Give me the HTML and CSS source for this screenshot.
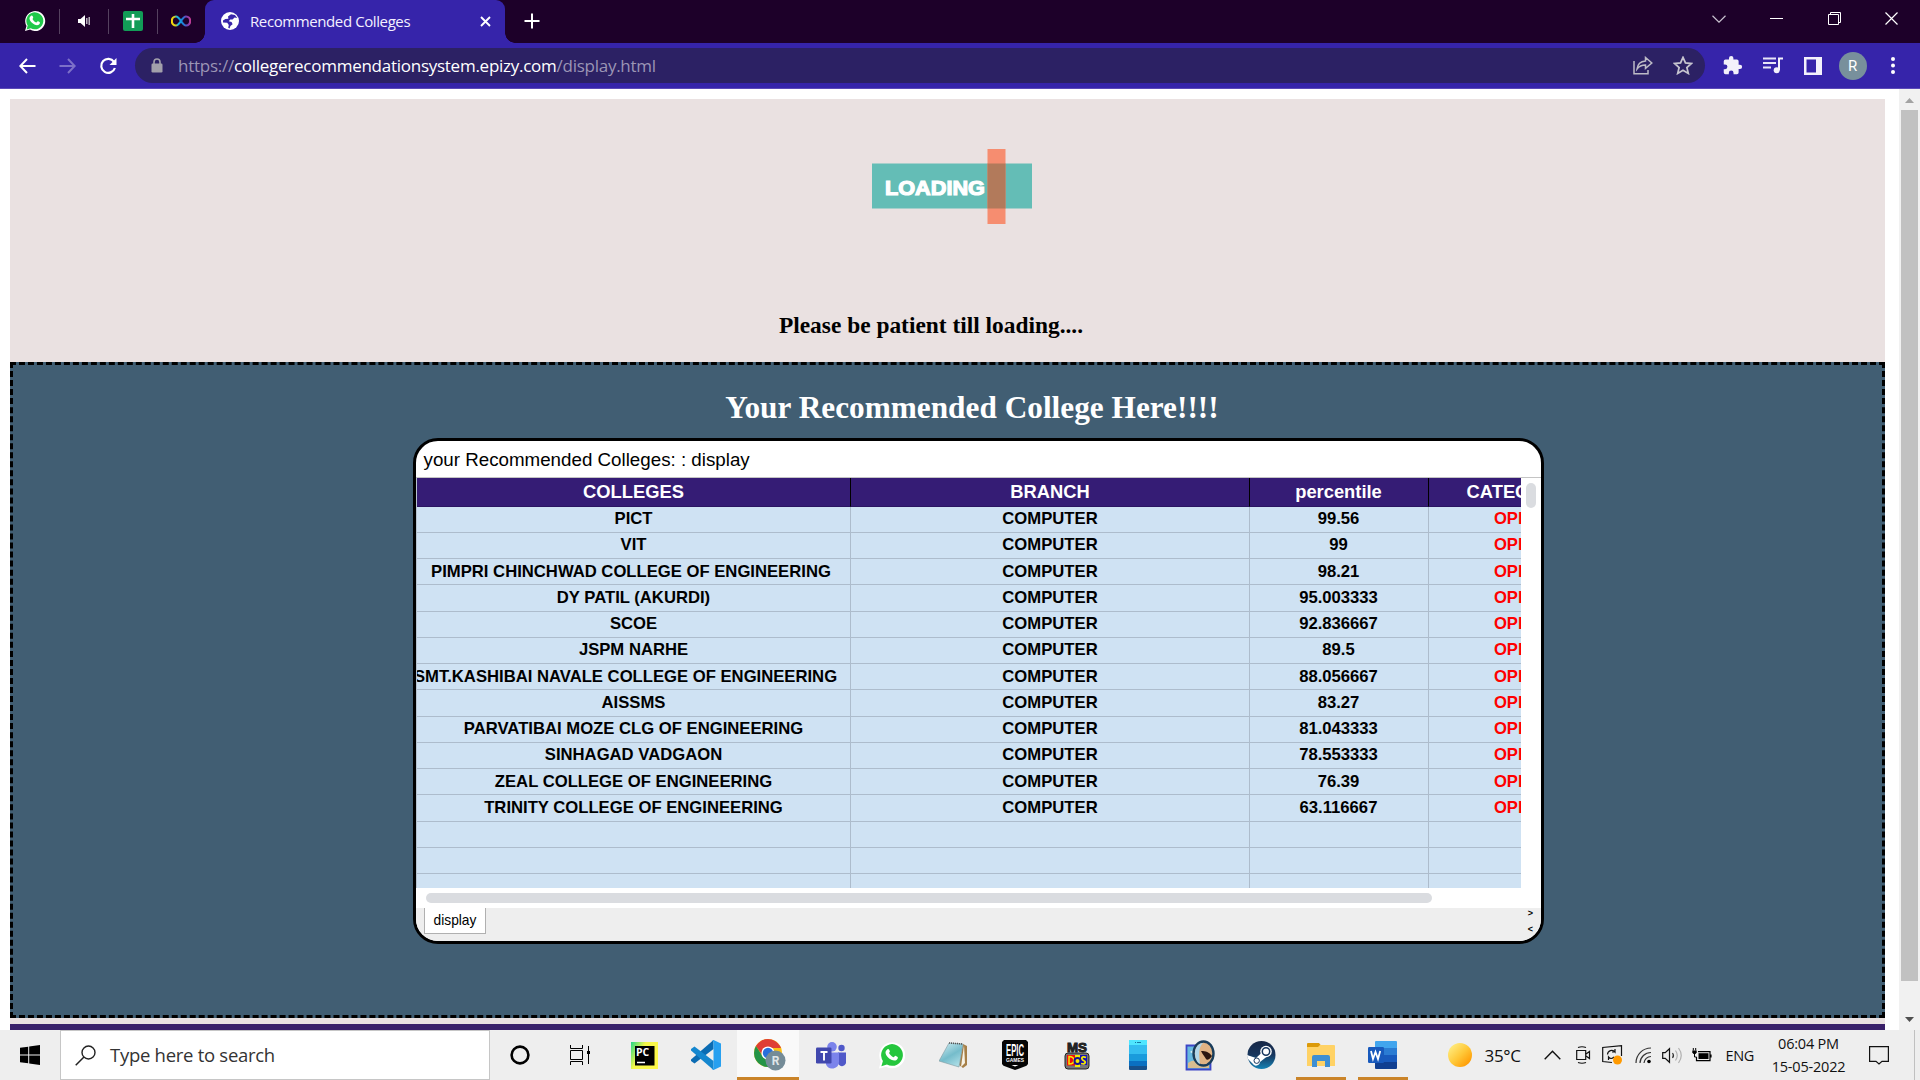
FILE: index.html
```html
<!DOCTYPE html>
<html lang="en">
<head>
<meta charset="utf-8">
<title>Recommended Colleges</title>
<link rel="stylesheet" href="styles.css">
</head>
<body>
<header class="tabstrip">
  <div class="pinned">
    <span class="pin pin-first"><svg width="22" height="22" viewBox="0 0 22 22"><path d="M1 21l1.500-5A10 10 0 1 1 6 19.600z" fill="#fff"/><path d="M2.600 19.400l1.100-3.900A8.500 8.500 0 1 1 6.700 18.300z" fill="#1fc94a"/><path d="M7.200 5.700c1-.8 1.600.5 2 1.700.2.700-.9 1.200-.6 1.800.9 1.600 2 2.600 3.600 3.200.7.200 1.100-1.300 1.700-1.100 1 .4 2.500 1 2 2-.8 2.300-3.300 2.300-5.500 1.200-2.600-1.200-4.500-3.500-4.900-5.700-.1-1.400.8-2.400 1.700-3.100z" fill="#fff"/></svg></span>
    <span class="pin"><svg width="14" height="14" viewBox="0 0 14 14"><path d="M1 5h2.500L8 1v12L3.500 9H1z" fill="#fff"/><path d="M9.800 4v6M12.200 3v8" stroke="#fff" stroke-width="1.300" opacity=".8"/></svg></span>
    <span class="pin"><svg width="20" height="20" viewBox="0 0 20 20"><rect width="20" height="20" rx="2" fill="#129c57"/><path d="M10 3v14M3 8h14" stroke="#fff" stroke-width="2.600"/></svg></span>
    <span class="pin pin-last"><svg width="20" height="12" viewBox="0 0 20 12"><defs><linearGradient id="rainbow" gradientUnits="userSpaceOnUse" x1="0" y1="8" x2="20" y2="5"><stop offset="0" stop-color="#ffd800"/><stop offset=".2" stop-color="#d8d020"/><stop offset=".35" stop-color="#13b7e8"/><stop offset=".6" stop-color="#1c7fd6"/><stop offset=".8" stop-color="#7a3fb5"/><stop offset="1" stop-color="#c93a8f"/></linearGradient></defs><path d="M10 6C8 3 6.500 1.500 5 1.500a4.200 4.500 0 0 0 0 9C6.500 10.500 8 9 10 6S13.500 1.500 15 1.500a4.200 4.500 0 0 1 0 9C13.500 10.500 12 9 10 6z" fill="none" stroke="url(#rainbow)" stroke-width="2.200"/></svg></span>
  </div>
  <div class="tab">
    <svg width="18" height="18" viewBox="0 0 18 18"><circle cx="9" cy="9" r="9" fill="#fff"/><path d="M10 2.200l-3 2.200.4 2.300-3 .2L2 8.500v2l4.200.2 1.600 2.300-.6 2.700 1.400.8.800-2.500 2.200-1.700-1-2.300-2.800-.7 1.400-1.800 2.300-.1 2.100-2 2.700.5-2.400-2.800z" fill="#3a26aa"/></svg>
    <span class="tab-title">Recommended Colleges</span>
    <svg class="tab-close" width="11" height="11" viewBox="0 0 11 11"><path d="M1 1l9 9M10 1l-9 9" stroke="#fff" stroke-width="1.900"/></svg>
  </div>
  <svg class="newtab" width="16" height="16" viewBox="0 0 16 16"><path d="M8 .5v15M.5 8h15" stroke="#fff" stroke-width="2"/></svg>
  <div class="window-buttons">
    <span><svg width="14" height="8" viewBox="0 0 14 8"><path d="M.5.8L7 7.200 13.500.8" fill="none" stroke="#c9c1cf" stroke-width="1.200"/></svg></span>
    <span><svg width="13" height="2" viewBox="0 0 13 2"><path d="M0 .5h13" stroke="#fff"/></svg></span>
    <span><svg width="13" height="13" viewBox="0 0 13 13"><path d="M.5 2.500h10v10H.5zM2.500 2.500v-2h10v10h-2" fill="none" stroke="#fff"/></svg></span>
    <span><svg width="13" height="13" viewBox="0 0 13 13"><path d="M.5.5l12 12M12.500.5l-12 12" stroke="#fff" stroke-width="1.200"/></svg></span>
  </div>
</header>

<nav class="toolbar">
  <div class="nav-buttons">
    <span><svg width="17" height="16" viewBox="0 0 17 16"><path d="M16.500 8H1.500M8 1L1.300 8 8 15" fill="none" stroke="#fff" stroke-width="2"/></svg></span>
    <span><svg width="17" height="16" viewBox="0 0 17 16"><path d="M.5 8h15M9 1l6.700 7L9 15" fill="none" stroke="#7d70c9" stroke-width="2"/></svg></span>
    <span><svg width="18" height="18" viewBox="0 0 18 18"><path d="M15 4.800A7 7 0 1 0 15.900 11" fill="none" stroke="#fff" stroke-width="2.200"/><path d="M17.500 1v7h-7z" fill="#fff"/></svg></span>
  </div>
  <div class="address">
    <svg width="12" height="15" viewBox="0 0 12 15"><rect x=".5" y="5.500" width="11" height="9" rx="1.200" fill="#a2a0ab"/><path d="M3 6V4a3 3 0 0 1 6 0v2" fill="none" stroke="#a2a0ab" stroke-width="1.600"/></svg>
    <span class="url">https://<b>collegerecommendationsystem.epizy.com</b>/display.html</span>
    <svg class="share" width="20" height="19" viewBox="0 0 20 19"><path d="M1 5v12.700h14V14" fill="none" stroke="#bdbbc6" stroke-width="1.500"/><path d="M4 13c.6-5 3.500-7.600 8.500-8V1.500L18.800 7l-6.300 5.400V9C8.500 9 6 10.300 4 13z" fill="none" stroke="#bdbbc6" stroke-width="1.500"/></svg>
    <svg width="20" height="19" viewBox="0 0 24 24"><path d="M12 1.800l3.100 7 7.600.7-5.800 5 1.800 7.500-6.700-4-6.700 4L7.100 14.500l-5.800-5 7.600-.7z" fill="none" stroke="#c6c4cf" stroke-width="2.200"/></svg>
  </div>
  <div class="extensions">
    <span><svg width="21" height="21" viewBox="0 0 24 24"><path d="M20.500 11H19V7a2 2 0 0 0-2-2h-4V3.500a2.500 2.500 0 0 0-5 0V5H4a2 2 0 0 0-2 2v3.800h1.500a2.700 2.700 0 0 1 0 5.400H2V20a2 2 0 0 0 2 2h3.800v-1.500a2.700 2.700 0 0 1 5.400 0V22H17a2 2 0 0 0 2-2v-4h1.500a2.500 2.500 0 0 0 0-5z" fill="#f3f1fb"/></svg></span>
    <span><svg width="20" height="17" viewBox="0 0 20 17"><path d="M0 1.500h13M0 6h13M0 10.500h8" stroke="#e8e5f7" stroke-width="1.800"/><path d="M16 13V1.500h4" fill="none" stroke="#f3f1fb" stroke-width="2"/><circle cx="13.700" cy="13.300" r="3" fill="#f3f1fb"/></svg></span>
    <span><svg width="18" height="18" viewBox="0 0 18 18"><path d="M0 0h18v18H0zM2.500 2.500v13H12v-13z" fill="#f3f1fb" fill-rule="evenodd"/></svg></span>
    <span><i class="avatar">R</i></span>
    <span><svg width="4" height="17" viewBox="0 0 4 17"><g fill="#fff"><circle cx="2" cy="2" r="2"/><circle cx="2" cy="8.500" r="2"/><circle cx="2" cy="15" r="2"/></g></svg></span>
  </div>
</nav>

<div class="viewport">
  <main class="page">
    <section class="loading">
      <svg class="loader" width="160" height="77" viewBox="0 0 160 77"><rect y="15.500" width="160" height="45" fill="#64bdb6"/><text class="loader-text" x="13" y="46.500" textLength="100" lengthAdjust="spacingAndGlyphs">LOADING</text><rect x="115.500" y="1" width="18" height="75" fill="#f68d70"/><rect x="115.500" y="15.500" width="18" height="45" fill="#b27a5b"/></svg>
      <h3>Please be patient till loading....</h3>
    </section>
    <section class="result">
      <h2>Your Recommended College Here!!!!</h2>
      <div class="sheet">
        <div class="sheet-title">your Recommended Colleges: : display</div>
        <div class="sheet-body">
          <div class="grid">
            <div class="row head"><span>COLLEGES</span><span>BRANCH</span><span>percentile</span><span>CATEGORY</span></div>
            <div class="row"><span>PICT</span><span>COMPUTER</span><span>99.56</span><span>OPEN</span></div>
            <div class="row"><span>VIT</span><span>COMPUTER</span><span>99</span><span>OPEN</span></div>
            <div class="row"><span class="trail">PIMPRI CHINCHWAD COLLEGE OF ENGINEERING</span><span>COMPUTER</span><span>98.21</span><span>OPEN</span></div>
            <div class="row"><span>DY PATIL (AKURDI)</span><span>COMPUTER</span><span>95.003333</span><span>OPEN</span></div>
            <div class="row"><span>SCOE</span><span>COMPUTER</span><span>92.836667</span><span>OPEN</span></div>
            <div class="row"><span>JSPM NARHE</span><span>COMPUTER</span><span>89.5</span><span>OPEN</span></div>
            <div class="row"><span class="wide">SMT.KASHIBAI NAVALE COLLEGE OF ENGINEERING</span><span>COMPUTER</span><span>88.056667</span><span>OPEN</span></div>
            <div class="row"><span>AISSMS</span><span>COMPUTER</span><span>83.27</span><span>OPEN</span></div>
            <div class="row"><span>PARVATIBAI MOZE CLG OF ENGINEERING</span><span>COMPUTER</span><span>81.043333</span><span>OPEN</span></div>
            <div class="row"><span>SINHAGAD VADGAON</span><span>COMPUTER</span><span>78.553333</span><span>OPEN</span></div>
            <div class="row"><span>ZEAL COLLEGE OF ENGINEERING</span><span>COMPUTER</span><span>76.39</span><span>OPEN</span></div>
            <div class="row"><span>TRINITY COLLEGE OF ENGINEERING</span><span>COMPUTER</span><span>63.116667</span><span>OPEN</span></div>
            <div class="row"><span></span><span></span><span></span><span></span></div>
            <div class="row"><span></span><span></span><span></span><span></span></div>
            <div class="row"><span></span><span></span><span></span><span></span></div>
          </div>
          <div class="vthumb"></div>
        </div>
        <div class="hscroll"><div class="hthumb"></div></div>
        <div class="sheet-tabs"><span class="sheet-tab">display</span><span class="sheet-arrows"><i>&gt;</i><i>&lt;</i></span></div>
      </div>
    </section>
    <div class="page-footer"></div>
  </main>
  <aside class="scrollbar">
    <svg width="9" height="5" viewBox="0 0 9 5"><path d="M4.500 0L9 5H0z" fill="#a3a3a3"/></svg>
    <div class="thumb"></div>
    <svg class="down" width="9" height="5" viewBox="0 0 9 5"><path d="M0 0h9L4.500 5z" fill="#505050"/></svg>
  </aside>
</div>

<footer class="taskbar">
  <span class="start"><svg width="20" height="20" viewBox="0 0 20 20"><path d="M0 2.800L8.200 1.700v7.800H0zM9.200 1.500L20 0v9.500H9.200zM0 10.500h8.200v7.800L0 17.200zM9.200 10.500H20V20L9.200 18.500z"/></svg></span>
  <div class="search"><svg width="21" height="21" viewBox="0 0 21 21"><circle cx="13.500" cy="7.500" r="6.500" fill="none" stroke="#222" stroke-width="1.400"/><path d="M9 12L.7 20.300" stroke="#222" stroke-width="1.500"/></svg><span>Type here to search</span></div>
  <span class="sys"><svg width="20" height="20" viewBox="0 0 20 20"><circle cx="10" cy="10" r="8.400" fill="none" stroke="#000" stroke-width="2.600"/></svg></span>
  <span class="sys"><svg width="20" height="20" viewBox="0 0 20 20"><path d="M.5 0v3.500h12V0M.5 20v-3.500h12V20M.5 5.500h12v9H.5zM18.500 1v18" fill="none" stroke="#000"/><path d="M17 6h3v3h-3z"/></svg></span>
  <div class="apps">
    <span class="app"><svg width="27" height="27" viewBox="0 0 27 27"><defs><linearGradient id="pc" x2="1" y2=".5"><stop offset="0" stop-color="#21d789"/><stop offset=".45" stop-color="#f6f84a"/><stop offset="1" stop-color="#fcf84a"/></linearGradient></defs><rect width="27" height="27" fill="url(#pc)"/><rect x="4" y="4" width="19.500" height="19.500" fill="#000"/><text x="5" y="14" class="pc">PC</text><path d="M6 20.500h8" stroke="#fff" stroke-width="1.500"/></svg></span>
    <span class="app"><svg width="30" height="30" viewBox="0 0 30 30"><path d="M22.500 0v9L3.500 23.500 0 21V19.500z" fill="#0b6cb3"/><path d="M0 10.500V9l3.500-2.500L22.500 21v9z" fill="#1587cf"/><path d="M22.500 0L30 3.500v23L22.500 30l-1.800-1c1 .5 1.800-.4 1.800-1.500v-25C22.500 1.300 21.500.4 20.700 1z" fill="#27a0f0"/></svg></span>
    <span class="app active"><svg width="33" height="32" viewBox="0 0 33 32"><circle cx="15" cy="14" r="14" fill="#fbc116"/><path d="M2.900 7A14 14 0 0 1 27.100 7L28 9H15l-5 8z" fill="#df3e34"/><path d="M2.900 7A14 14 0 0 0 15 28l5.500-10L9.500 17z" fill="#249447"/><circle cx="15" cy="14" r="6.600" fill="#fff"/><circle cx="15" cy="14" r="5.200" fill="#286fdb"/><circle cx="22.500" cy="21.500" r="10" fill="#758c98"/><text x="22.500" y="26" class="badge-r">R</text></svg></span>
    <span class="app shift"><svg width="30" height="27" viewBox="0 0 30 27"><circle cx="25.500" cy="6" r="3.200" fill="#5059c9"/><path d="M22 10.500h8v8.500a4 4 0 0 1-8 2z" fill="#5059c9"/><circle cx="16" cy="4.800" r="4.800" fill="#7b83eb"/><path d="M10 10.500h13v9.500a6.800 6.800 0 0 1-13 2.500z" fill="#7b83eb"/><rect y="5.500" width="15.500" height="16" rx="1.300" fill="#4047ad"/><path d="M4.500 10h7M8 10v8.500" stroke="#fff" stroke-width="1.900"/></svg></span>
    <span class="app shift"><svg width="26" height="27" viewBox="0 0 22 22"><path d="M0 22l1.500-6A11 11 0 1 1 6 20.500z" fill="#fff"/><path d="M2 20l1.300-4.400A9.200 9.200 0 1 1 6.700 18.700z" fill="#25c63d"/><path d="M7.200 5.700c1-.8 1.600.5 2 1.700.2.700-.9 1.200-.6 1.800.9 1.600 2 2.600 3.600 3.200.7.200 1.100-1.300 1.700-1.100 1 .4 2.500 1 2 2-.8 2.300-3.300 2.300-5.500 1.200-2.600-1.200-4.500-3.500-4.900-5.700-.1-1.400.8-2.400 1.700-3.100z" fill="#fff"/></svg></span>
    <span class="app shift"><svg width="29" height="27" viewBox="0 0 29 27"><defs><linearGradient id="np" x2=".6" y2="1"><stop offset="0" stop-color="#d6f0f4"/><stop offset=".6" stop-color="#75bccb"/><stop offset="1" stop-color="#a8dbe4"/></linearGradient></defs><path d="M24 2l4 2v19l-4 3-4-3z" fill="#a67f47"/><path d="M25 3l1 18-4 4z" fill="#f7f3e6"/><path d="M10 1l14 1-4 23-20-6z" fill="url(#np)" stroke="#80999f" stroke-width=".6"/><path d="M10 1l14 1" stroke="#555" stroke-width="1.600" stroke-dasharray="1 1"/></svg></span>
    <span class="app shift"><svg width="26" height="30" viewBox="0 0 26 30"><path d="M2 0h22l2 2v22l-1.500 1.700L13 30 1.500 25.700 0 24V2z" fill="#050505"/><text x="13" y="15.500" textLength="18" lengthAdjust="spacingAndGlyphs" class="epic">EPIC</text><text x="13" y="22.300" textLength="18" lengthAdjust="spacingAndGlyphs" class="games">GAMES</text><path d="M9.500 25h7L13 26.500z" fill="#fff"/></svg></span>
    <span class="app shift"><svg width="26" height="29" viewBox="0 0 26 29"><text x="13" y="10.500" textLength="20" lengthAdjust="spacingAndGlyphs" class="ms">MS</text><rect x="1" y="12" width="24" height="16" rx="3" fill="#777" stroke="#222"/><rect x="3" y="14" width="8" height="10.500" fill="#f20c0c"/><path d="M11 14h5v12h-5z" fill="#f5e900"/><path d="M16 14h7v10h-7z" fill="#1612b5"/><path d="M5 15.500v7.500c6.500 0 6.500-7.500 0-7.500z" fill="none" stroke="#f5e900" stroke-width="1.500"/><path d="M22 16.500c-5-2-5 2-2.500 3s2.500 4.500-2.500 3" fill="none" stroke="#f5e900" stroke-width="1.800"/><circle cx="13.500" cy="20" r="3" fill="none" stroke="#161294" stroke-width="2"/></svg></span>
    <span class="app shift"><svg width="18" height="30" viewBox="0 0 18 30"><rect width="18" height="30" rx="1" fill="#17508a"/><path d="M0 1h18v25H0z" fill="#0b70c1"/><path d="M0 0h18v21H0z" fill="#1a9bdc"/><path d="M0 0h18v14H0z" fill="#34bdf0"/><path d="M0 0h18v5H0z" fill="#50e6ff"/><path d="M6 2.500h1m1 0h4" stroke="#1779a4"/></svg></span>
    <span class="app shift"><svg width="30" height="31" viewBox="0 0 30 31"><path d="M1.500 5.500h24v24h-24z" fill="#67b9df" stroke="#3c45c6" stroke-width="1.800"/><path d="M3 23c7-6 12 2 21-3v8H3z" fill="#d7bd91"/><path d="M5 12c5-4 5 2 9-1l-2 5z" fill="#d4f0f7"/><ellipse cx="18.500" cy="13.500" rx="10" ry="12" fill="#e0b384" stroke="#193d5b" stroke-width="2.400"/><path d="M10 13c0-6 4-10 8-10-5 5-4 12-3 21-3-1-5-6-5-11z" fill="#b1d6e9"/><path d="M16 11c5 0 8 1 11 5-2 3-5 5-6 3s-3-4-5-8z" fill="#2d1710"/></svg></span>
    <span class="app shift"><svg width="29" height="28" viewBox="0 0 29 28"><defs><linearGradient id="st" x2="0" y2="1"><stop offset="0" stop-color="#172745"/><stop offset=".5" stop-color="#17365e"/><stop offset="1" stop-color="#1583b5"/></linearGradient></defs><circle cx="14.500" cy="14" r="14" fill="url(#st)"/><path d="M0 14l9 3 6-5.500 5 4-7 5.500a4 4 0 0 1-7.500 1.500L1 18z" fill="#fff"/><circle cx="19" cy="10.500" r="5.800" fill="#fff"/><circle cx="19" cy="10.500" r="3.700" fill="#fff" stroke="#17365e" stroke-width="1.500"/><circle cx="9.700" cy="19.700" r="2.700" fill="none" stroke="#17365e"/></svg></span>
    <span class="app running"><svg width="28" height="24" viewBox="0 0 28 24"><path d="M0 1q0-1 1-1h11l2 2.500V6H0z" fill="#dc9a09"/><path d="M0 4h11l2-2h14q1 0 1 1v20H0z" fill="#ffd265"/><path d="M5 24V14q0-2 2-2h14q2 0 2 2v10h-5v-6h-8v6z" fill="#3e8fd3"/></svg></span>
    <span class="app running"><svg width="29" height="28" viewBox="0 0 29 28"><path d="M7 1q0-1 1-1h20q1 0 1 1v6H7z" fill="#41a5ee"/><path d="M7 7h22v7H7z" fill="#2b7cd3"/><path d="M7 14h22v7H7z" fill="#185abd"/><path d="M7 21h22v6q0 1-1 1H8q-1 0-1-1z" fill="#103f91"/><rect y="6" width="16" height="16" rx="1.200" fill="#185abd"/><path d="M3 10l2 8 2.500-7 2.500 7 2.200-8" fill="none" stroke="#fff" stroke-width="1.800"/></svg></span>
  </div>
  <div class="tray">
    <i class="sun"></i>
    <span class="temp">35°C</span>
    <svg class="up" width="17" height="10" viewBox="0 0 17 10"><path d="M.7 9.200L8.500 1.200l7.800 8" fill="none" stroke="#111" stroke-width="1.400"/></svg>
    <svg class="cam" width="15" height="18" viewBox="0 0 15 18"><path d="M.7 4.500h9v9h-9zM10 8l3.500-2.500v7L10 10M2 1.500q4-1.500 8 0M2 16.500q4 1.500 8 0" fill="none" stroke="#111" stroke-width="1.200"/></svg>
    <svg class="update" width="21" height="20" viewBox="0 0 21 20"><path d="M10 17.500L.7 16.500v-14L19.500.7V11M5.500 9.500a4.200 4.200 0 0 1 7.500-2.500V4M13 7h-3M12 12q-3 3-5.500 0V15" fill="none" stroke="#111" stroke-width="1.200"/><circle cx="15.500" cy="15" r="4.500" fill="#ff9a00"/></svg>
    <svg class="wifi" width="17" height="17" viewBox="0 0 17 17"><path d="M1 16A15 15 0 0 1 16 1M5 16A11 11 0 0 1 16 5.500M9 16a7 7 0 0 1 7-6.500" fill="none" stroke="#333" stroke-width="1.200"/><circle cx="14" cy="14.500" r="1.800"/></svg>
    <svg class="volume" width="21" height="17" viewBox="0 0 21 17"><path d="M.7 5.700h2.500l4.300-4v13.600l-4.300-4H.7z" fill="none" stroke="#111" stroke-width="1.200"/><path d="M10.500 6q2 2.500 0 5" fill="none" stroke="#333" stroke-width="1.200"/><path d="M13.500 3.500q3.500 5 0 10M16.500 1q5.500 7.500 0 15" fill="none" stroke="#b0b0b0" stroke-width="1.200"/></svg>
    <svg class="battery" width="20" height="14" viewBox="0 0 20 14"><path d="M6 3.600h12v9H4.500V9M19 6.500v3" fill="none" stroke="#000" stroke-width="1.200"/><path d="M6.500 5.200h10v5.800h-10z"/><path d="M.3 2.500h4.400v2L3.500 6h-2L.3 4.500z"/><path d="M1.300 0v2.500M3.700 0v2.500M2.500 5.500V9h2" fill="none" stroke="#000"/></svg>
    <span class="lang">ENG</span>
    <div class="clock"><span>06:04 PM</span><span>15-05-2022</span></div>
    <svg class="notes" width="20" height="20" viewBox="0 0 20 20"><path d="M.6 1.600h18.800v14.800h-6.400L10 19l-3-2.600H.6z" fill="none" stroke="#111" stroke-width="1.200"/></svg>
    <i class="desktop-edge"></i>
  </div>
</footer>
</body>
</html>
```
FILE: styles.css
```css
* { box-sizing: border-box; }
body {
  margin: 0;
  width: 1920px;
  height: 1080px;
  overflow: hidden;
  display: flex;
  flex-direction: column;
  background: #fff;
  font-family: "Open Sans", "Noto Sans", sans-serif;
}
svg { display: block; flex: none; }
i { font-style: normal; }

/* browser tabs */
.tabstrip { height: 43px; display: flex; background: #1d0029; flex: none; }
.pinned { display: flex; width: 205px; align-items: center; padding-bottom: 1px; }
.pin { width: 49px; height: 25px; display: flex; align-items: center; justify-content: center; border-right: 1px solid #55415f; }
.pin-first { width: 60px; padding-left: 11px; }
.pin-last { border: 0; width: 46px; }
.tab {
  width: 300px;
  display: flex;
  align-items: center;
  padding: 0 14px 1px 16px;
  background: #3624aa;
  border-radius: 9px 9px 0 0;
  position: relative;
}
.tab::before, .tab::after {
  content: "";
  position: absolute;
  bottom: 0;
  width: 10px;
  height: 10px;
}
.tab::before { left: -10px; background: radial-gradient(circle at 0 0, #1d0029 9.500px, #3624aa 10px); }
.tab::after { right: -10px; background: radial-gradient(circle at 100% 0, #1d0029 9.500px, #3624aa 10px); }
.tab-title { color: #f3f0ff; font-size: 15px; margin-left: 11px; padding-bottom: 1px; letter-spacing: -.4px; white-space: nowrap; }
.tab-close { margin-left: auto; }
.newtab { margin: 13px 0 0 19px; }
.window-buttons { margin-left: auto; display: flex; align-items: center; padding-bottom: 6px; }
.window-buttons span { width: 57.300px; display: flex; justify-content: center; }

/* navigation and address */
.toolbar { height: 46px; display: flex; align-items: center; background: #3624aa; border-bottom: 1px solid #5c4ab8; flex: none; }
.nav-buttons { display: flex; width: 135px; padding-left: 7px; }
.nav-buttons span { width: 40.500px; display: flex; justify-content: center; align-items: center; }
.address { width: 1570px; height: 35px; border-radius: 18px; background: #2c2164; display: flex; align-items: center; padding: 0 12px 0 16px; }
.url { color: #9b95b5; margin-left: 15px; font-size: 17px; letter-spacing: -.26px; white-space: nowrap; }
.url b { color: #fff; font-weight: 400; }
.share { margin-left: auto; margin-right: 20px; }
.extensions { display: flex; padding-left: 7.500px; }
.extensions span { width: 40px; height: 28px; display: flex; align-items: center; justify-content: center; }
.avatar { width: 28px; height: 28px; border-radius: 50%; background: #78909c; color: #fff; font: 15px/28px Roboto, sans-serif; text-align: center; }

/* page */
.viewport { height: 941px; display: flex; flex: none; overflow: hidden; }
.page { width: 1875px; margin: 10px 14px 0 10px; background: #eae1e1; }
.loading { height: 263px; padding-top: 49px; display: flex; flex-direction: column; align-items: center; }
.loader { margin-left: 9px; }
.loader-text { font: bold 20.500px "Liberation Sans", Arial, sans-serif; fill: #fff; stroke: #fff; stroke-width: 1.200px; }
.loading h3 { font: bold 23.400px/27px "Liberation Serif", "Times New Roman", serif; margin: 87px 33px 0 0; }
.result { height: 656px; border: 3px dashed #000; background: #415e73; display: flex; flex-direction: column; align-items: center; }
.result h2 { color: #fff; font: bold 31.300px/36px "Liberation Serif", "Times New Roman", serif; margin: 25px 0 12px 49px; }
.page-footer { height: 6px; background: #3a2069; margin-top: 6px; }

.sheet {
  width: 1131px;
  height: 506px;
  margin-left: 62px;
  border: 3px solid #000;
  border-radius: 25px;
  background: #fff;
  overflow: hidden;
  font-family: "Liberation Sans", Arial, sans-serif;
}
.sheet-title { height: 37px; line-height: 37px; padding-left: 7.500px; font-size: 18.750px; border-bottom: 1px solid #c4c4c4; }
.sheet-body { display: flex; height: 410px; }
.grid { width: 1105px; border-left: 1px solid #b7c3cf; overflow: hidden; flex: none; background: #cfe2f3; }
.row { display: grid; grid-template-columns: 434px 399px 179px 179px; height: 26.250px; }
.row span {
  display: flex;
  justify-content: center;
  align-items: center;
  overflow: hidden;
  white-space: nowrap;
  border-right: 1px solid #adbccc;
  border-bottom: 1px solid #adbccc;
  font-weight: bold;
  font-size: 16.670px;
  line-height: 20px;
}
.row span:nth-child(4) { color: #f00; }
.row span:nth-child(n+3) { padding-right: 1px; }
.row .trail { padding-right: 5px; }
.row .wide { padding-right: 16px; }
.row.head { height: 28.500px; background: #351c75; }
.row.head span { color: #fff; font-size: 18.330px; border-color: #000; border-bottom-color: #2b1562; }
.vthumb { width: 10px; height: 25px; border-radius: 5px; background: #dadce0; margin: 5px 0 0 5px; }
.hscroll { height: 20px; padding: 5px 0 0 10px; }
.hthumb { width: 1006px; height: 10px; border-radius: 5px; background: #dadce0; }
.sheet-tabs { height: 33px; background: #eee; display: flex; justify-content: space-between; padding: 0 8px; }
.sheet-tab { width: 62px; height: 26px; border: 1px solid #b0b0b0; border-top: 0; background: #fff; font-size: 13.750px; line-height: 25px; text-align: center; }
.sheet-arrows { display: flex; flex-direction: column; font-size: 9px; line-height: 16px; margin-top: -3px; font-weight: bold; }

.scrollbar { width: 21px; background: #f1f1f1; display: flex; flex-direction: column; align-items: center; padding-top: 9px; }
.thumb { width: 17px; height: 871px; margin-top: 7px; background: #c1c1c1; }
.down { margin-top: 36px; }

/* taskbar */
.taskbar { height: 50px; background: #eee; display: flex; flex: none; }
.start { width: 60px; display: flex; align-items: center; justify-content: center; }
.search { width: 430px; border: 1px solid #c6c6c6; background: #fff; display: flex; align-items: center; padding-left: 14px; font-size: 18.500px; color: #333; }
.search span { margin-left: 14px; padding-bottom: 2px; letter-spacing: -.28px; }
.sys { width: 60px; display: flex; align-items: center; justify-content: center; }
.apps { display: flex; margin-left: 4px; }
.app { width: 61.500px; display: flex; align-items: center; justify-content: center; }
.shift { padding-left: 3px; }
.active { background: #f9f9f9; border-bottom: 3px solid #ca8429; padding: 3px 0 0 3px; }
.running { background: linear-gradient(#ca8429, #ca8429) center bottom / 50px 3px no-repeat; }
.pc { font: bold 10.500px "Open Sans", sans-serif; fill: #fff; }
.badge-r { font: bold 12px Roboto, sans-serif; fill: #dfe6e9; text-anchor: middle; }
.epic { font: bold 17px "Liberation Sans", sans-serif; fill: #fff; text-anchor: middle; }
.games { font: bold 5.500px "Liberation Sans", sans-serif; fill: #fff; text-anchor: middle; }
.ms { font: bold 13px "Liberation Sans", sans-serif; fill: #222; stroke: #222; text-anchor: middle; }

.tray { display: flex; align-items: center; margin-left: 34px; flex: 1; color: #111; }
.sun { width: 24px; height: 24px; border-radius: 50%; background: linear-gradient(135deg, #ffe878 15%, #ffc93a 50%, #ff9800 90%); }
.temp { width: 37px; margin-left: 13px; font-size: 17px; letter-spacing: -.3px; white-space: nowrap; }
.up { margin-left: 22px; }
.cam { margin-left: 15px; }
.update { margin-left: 11px; }
.wifi { margin-left: 12px; }
.volume { margin-left: 10px; }
.battery { margin-left: 9px; }
.lang { width: 28px; margin-left: 14px; font-size: 14.500px; letter-spacing: -.4px; }
.clock { width: 80px; margin-left: 15px; display: flex; flex-direction: column; align-items: center; font-size: 14.500px; line-height: 23px; letter-spacing: -.2px; white-space: nowrap; }
.notes { margin-left: 20px; }
.desktop-edge { margin-left: auto; margin-right: 5px; width: 1px; height: 50px; background: #c0c0c0; }
```
